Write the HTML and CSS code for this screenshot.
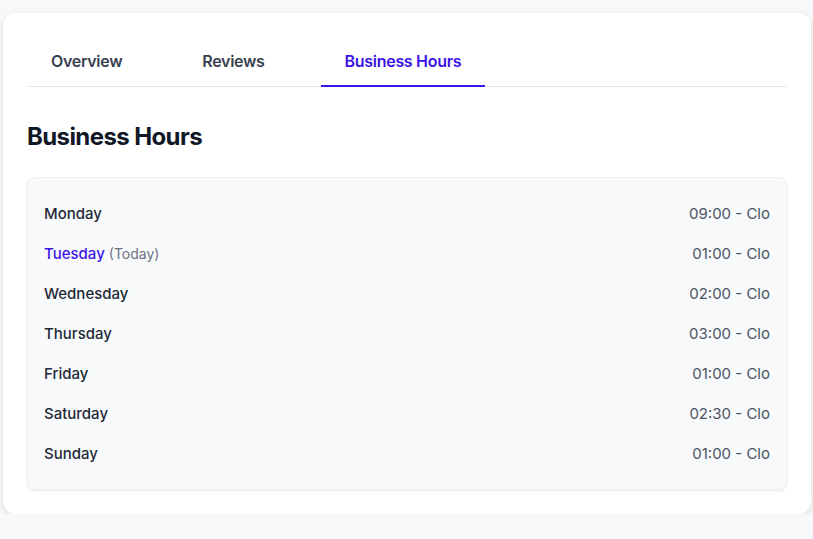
FILE: index.html
```html
<!DOCTYPE html>
<html lang="en">
<head>
<meta charset="utf-8">
<title>Business Hours</title>
<link rel="stylesheet" href="styles.css">
</head>
<body>
<div class="page">
  <div class="card">
    <nav class="tabs">
      <div class="tab">Overview</div>
      <div class="tab">Reviews</div>
      <div class="tab active">Business Hours</div>
    </nav>
    <h2 class="title">Business Hours</h2>
    <div class="hours">
      <div class="row"><span class="day">Monday</span><span class="time">09:00 - Clo</span></div>
      <div class="row"><span class="day today">Tuesday <span class="tag">(Today)</span></span><span class="time">01:00 - Clo</span></div>
      <div class="row"><span class="day">Wednesday</span><span class="time">02:00 - Clo</span></div>
      <div class="row"><span class="day">Thursday</span><span class="time">03:00 - Clo</span></div>
      <div class="row"><span class="day">Friday</span><span class="time">01:00 - Clo</span></div>
      <div class="row"><span class="day">Saturday</span><span class="time">02:30 - Clo</span></div>
      <div class="row"><span class="day">Sunday</span><span class="time">01:00 - Clo</span></div>
    </div>
  </div>
</div>
</body>
</html>
```
FILE: styles.css
```css
html, body {
  margin: 0;
  padding: 0;
  background: #f7f8fa;
  font-family: Inter, "Noto Sans", sans-serif;
  color: #111827;
}
.page {
  padding: 13px 2px 0 3px;
}
.card {
  background: #ffffff;
  border-radius: 12px;
  box-shadow: 0 3px 8px rgba(0, 0, 0, 0.09), 0 0 0 1px rgba(0,0,0,0.02);
  padding: 24px;
}
.tabs {
  display: flex;
  gap: 32px;
  border-bottom: 1px solid #e5e7eb;
}
.tab {
  padding: 12px 24px;
  font-size: 16px;
  line-height: 24px;
  font-weight: 600;
  letter-spacing: -0.3px;
  color: #374151;
  border-bottom: 2px solid transparent;
  margin-bottom: -1px;
}
.tab.active {
  color: #3d14e6;
  border-bottom-color: #3d14e6;
}
.title {
  margin: 32px 0 22px;
  font-size: 24px;
  line-height: 36px;
  font-weight: 700;
  letter-spacing: -0.6px;
  color: #111827;
}
.hours {
  background: #f8f9fb;
  border: 1px solid #eef0f3;
  border-radius: 8px;
  box-shadow: 0 1px 3px rgba(0, 0, 0, 0.08);
  padding: 15px 16px 16px;
}
.row {
  display: flex;
  justify-content: space-between;
  align-items: center;
  height: 40px;
  font-size: 15px;
  font-weight: 450;
}
.day {
  color: #1f2937;
}
.day.today {
  color: #3d14e6;
  font-weight: 500;
}
.tag {
  font-size: 14px;
  font-weight: 400;
  color: #6b7280;
}
.time {
  color: #4b5563;
  font-weight: 400;
}
```
